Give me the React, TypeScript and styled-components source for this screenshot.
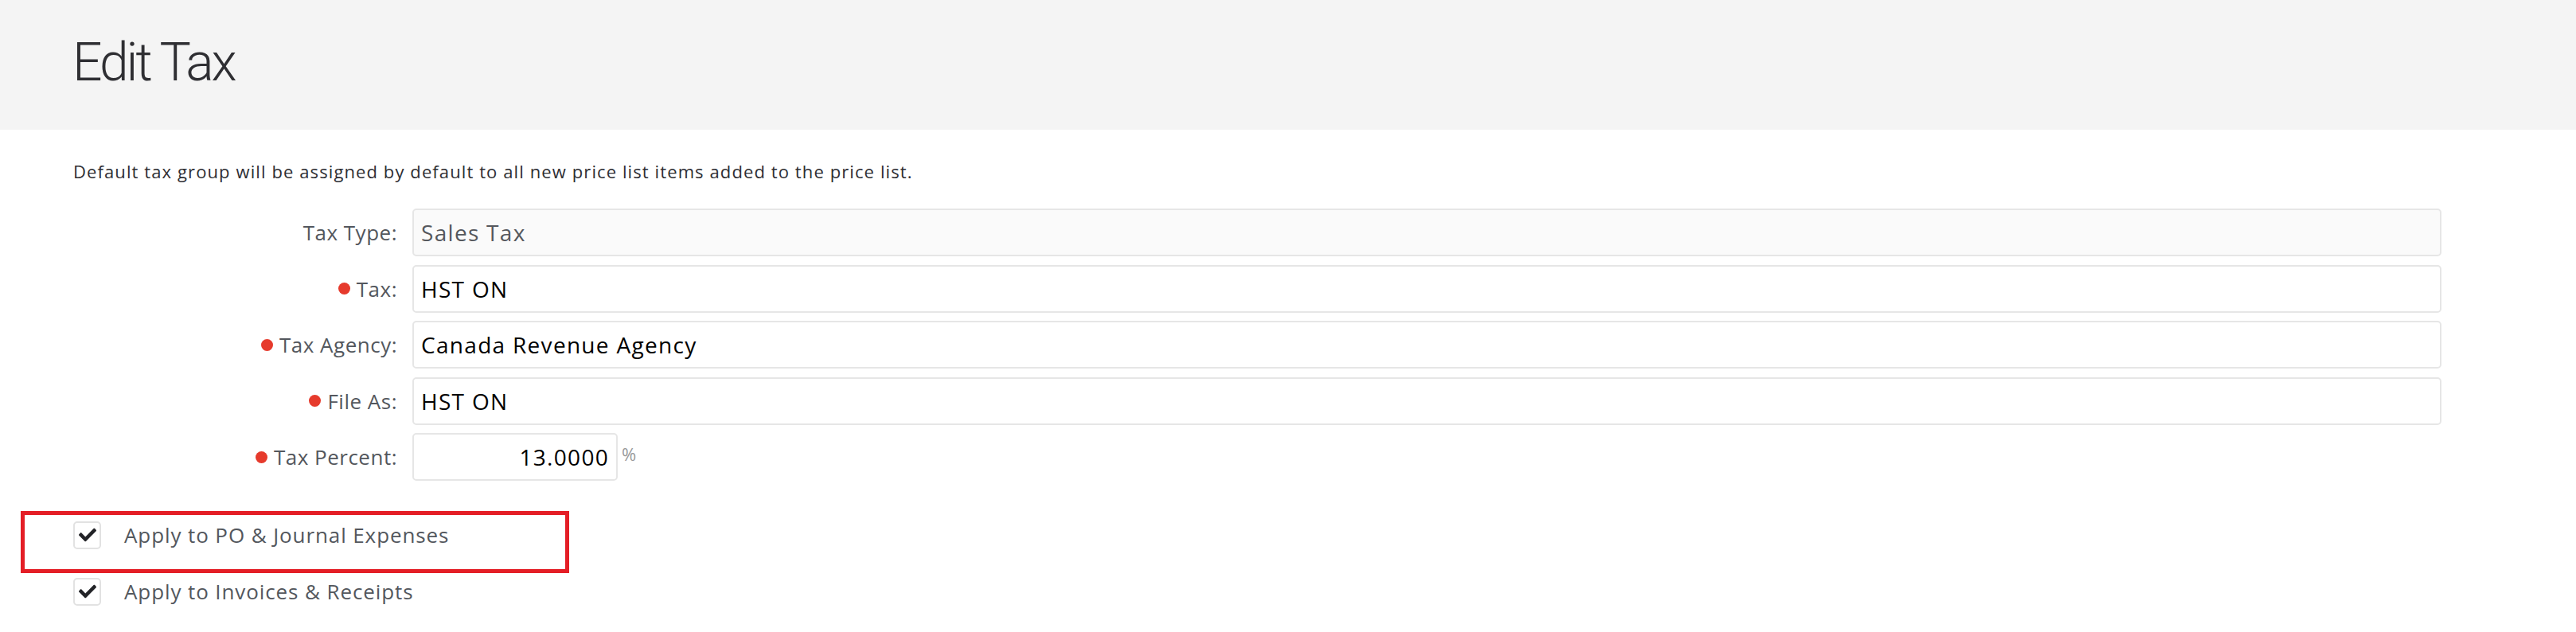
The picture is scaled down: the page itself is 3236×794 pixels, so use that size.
import React from "react";
import styled, { createGlobalStyle } from "styled-components";
import { FaCheck } from "react-icons/fa";

const GlobalStyle = createGlobalStyle`
  body {
    margin: 0;
    background: #fff;
    font-family: "Open Sans", "Noto Sans", sans-serif;
  }
`;

const Page = styled.div`
  width: 3236px;
  min-height: 794px;
`;

const Header = styled.header`
  box-sizing: border-box;
  height: 163px;
  padding: 46px 0 0 91px;
  background: #f4f4f4;
`;

const Title = styled.h1`
  margin: 0;
  font-family: Roboto, "Liberation Sans", sans-serif;
  font-weight: 300;
  font-size: 66px;
  line-height: 66px;
  letter-spacing: -3px;
  color: #2f2f33;
`;

const Body = styled.main`
  padding: 37px 169px 0 92px;
`;

const Note = styled.p`
  margin: 0 0 32px;
  font-size: 22px;
  line-height: 30px;
  letter-spacing: 1.1px;
  color: #2e2e33;
`;

const Form = styled.div`
  display: grid;
  grid-template-columns: 407px 1fr;
  column-gap: 19px;
  row-gap: 10.5px;
  align-items: center;
`;

const Label = styled.label`
  display: flex;
  justify-content: flex-end;
  align-items: center;
  gap: 8px;
  font-size: 26px;
  letter-spacing: 0.5px;
  color: #53575d;
`;

const Dot = styled.span`
  width: 15px;
  height: 15px;
  border-radius: 50%;
  background: #e63a2c;
`;

const Field = styled.div<{ $disabled?: boolean; $width?: number; $align?: string }>`
  box-sizing: border-box;
  display: flex;
  align-items: center;
  justify-content: ${(p) => (p.$align === "right" ? "flex-end" : "flex-start")};
  width: ${(p) => (p.$width ? `${p.$width}px` : "100%")};
  height: 60px;
  padding: 0 9px;
  border: 2px solid #e6e6e6;
  border-radius: 5px;
  background: ${(p) => (p.$disabled ? "#fafafa" : "#fff")};
  font-size: 28px;
  letter-spacing: 1.3px;
  color: ${(p) => (p.$disabled ? "#55585d" : "#000")};
`;

const FieldWrap = styled.div`
  display: flex;
  align-items: center;
  gap: 5px;
`;

const Unit = styled.span`
  margin-top: -8px;
  font-size: 22px;
  color: #999;
`;

const Checks = styled.div`
  display: flex;
  flex-direction: column;
  gap: 35px;
  margin-top: 50px;
`;

const CheckRow = styled.div`
  position: relative;
  display: flex;
  align-items: center;
  gap: 29px;
  font-size: 26px;
  letter-spacing: 0.9px;
  color: #53575d;
`;

const Box = styled.span`
  box-sizing: border-box;
  display: flex;
  align-items: center;
  justify-content: center;
  width: 35px;
  height: 35px;
  border: 2px solid #e2e2e2;
  border-radius: 5px;
  color: #222327;
`;

const Highlight = styled.div`
  position: absolute;
  top: -12px;
  left: -66px;
  width: 689px;
  height: 78px;
  box-sizing: border-box;
  border: 5px solid #e41e26;
  pointer-events: none;
`;

type Row = {
  label: string;
  value: string;
  required?: boolean;
  disabled?: boolean;
  percent?: boolean;
};

const rows: Row[] = [
  { label: "Tax Type:", value: "Sales Tax", disabled: true },
  { label: "Tax:", value: "HST ON", required: true },
  { label: "Tax Agency:", value: "Canada Revenue Agency", required: true },
  { label: "File As:", value: "HST ON", required: true },
  { label: "Tax Percent:", value: "13.0000", required: true, percent: true },
];

const App: React.FC = () => {
  return (
    <Page>
      <GlobalStyle />
      <Header>
        <Title>Edit Tax</Title>
      </Header>
      <Body>
        <Note>
          Default tax group will be assigned by default to all new price list items added to the
          price list.
        </Note>
        <Form>
          {rows.map((r) => (
            <React.Fragment key={r.label}>
              <Label>
                {r.required && <Dot />}
                {r.label}
              </Label>
              {r.percent ? (
                <FieldWrap>
                  <Field $width={258} $align="right">
                    {r.value}
                  </Field>
                  <Unit>%</Unit>
                </FieldWrap>
              ) : (
                <Field $disabled={r.disabled}>{r.value}</Field>
              )}
            </React.Fragment>
          ))}
        </Form>
        <Checks>
          <CheckRow>
            <Highlight />
            <Box>
              <FaCheck size={22} />
            </Box>
            Apply to PO &amp; Journal Expenses
          </CheckRow>
          <CheckRow>
            <Box>
              <FaCheck size={22} />
            </Box>
            Apply to Invoices &amp; Receipts
          </CheckRow>
        </Checks>
      </Body>
    </Page>
  );
};

export default App;
